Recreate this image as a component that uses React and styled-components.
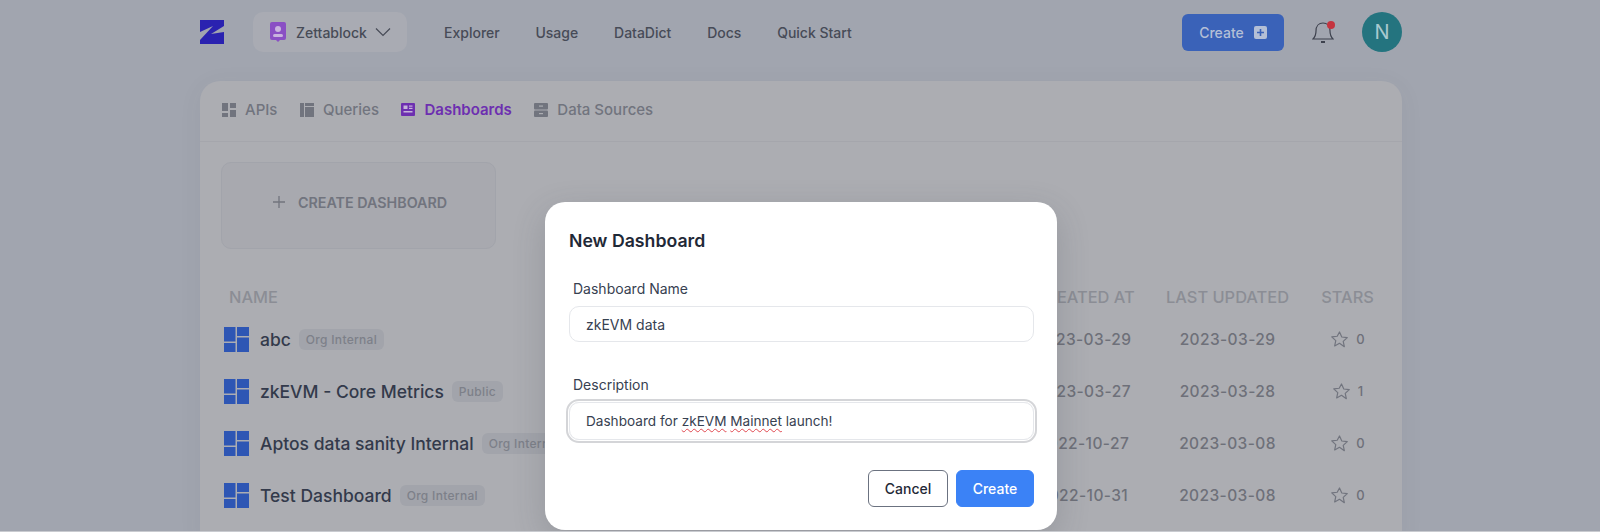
import React from 'react';
import styled, { createGlobalStyle } from 'styled-components';

const GlobalStyle = createGlobalStyle`
  html, body {
    margin: 0;
    height: 532px;
    overflow: hidden;
    background: #c9cbd0;
    font-family: Inter, "Liberation Sans", sans-serif;
  }
`;

const Page = styled.div`
  position: relative;
  height: 531px;
  overflow: hidden;
  background: #a1a5af;
  padding: 12px 198px 0 200px;
  box-sizing: border-box;
`;

const Nav = styled.nav`
  display: flex;
  align-items: center;
  height: 40px;
  margin-bottom: 29px;
`;

const Logo = styled.svg`
  width: 24px;
  height: 24px;
  margin-right: 29px;
`;

const Workspace = styled.div`
  width: 154px;
  height: 40px;
  box-sizing: border-box;
  padding-left: 17px;
  display: flex;
  align-items: center;
  gap: 8px;
  background: #a9abb3;
  border-radius: 10px;
  color: #474b57;
  font-size: 14px;
  font-weight: 500;
  margin-right: 37px;
`;

const WorkspaceName = styled.span`
  margin-left: 2px;
`;

const NavLinks = styled.div`
  display: flex;
  gap: 35.8px;
  flex: 1;
`;

const NavLink = styled.a`
  color: #474b57;
  font-size: 14px;
  font-weight: 500;
`;

const CreateNavButton = styled.button`
  width: 102px;
  height: 37px;
  border: 0;
  border-radius: 6px;
  background: #3a62b8;
  color: #b4bfd6;
  font: 500 14px Inter, sans-serif;
  display: flex;
  align-items: center;
  justify-content: center;
  gap: 10px;
  margin-right: 28px;
`;

const Bell = styled.div`
  position: relative;
  width: 22px;
  height: 26px;
  margin-right: 28px;
  &::after {
    content: '';
    position: absolute;
    top: 2px;
    right: -1px;
    width: 8px;
    height: 8px;
    border-radius: 50%;
    background: #c5343f;
  }
`;

const Avatar = styled.div`
  width: 40px;
  height: 40px;
  border-radius: 50%;
  background: #24747f;
  color: #a9c9cf;
  font-size: 20px;
  display: flex;
  align-items: center;
  justify-content: center;
`;

const Card = styled.section`
  background: #acadb2;
  border-radius: 20px 20px 0 0;
  box-shadow: 0 4px 24px rgba(60, 64, 80, 0.06);
  height: 460px;
`;

const Tabs = styled.div`
  display: flex;
  align-items: center;
  height: 61px;
  box-sizing: border-box;
  padding: 0 0 3px 22px;
  gap: 22.5px;
  border-bottom: 1px solid #a5a6ac;
`;

const Tab = styled.div`
  display: flex;
  align-items: center;
  gap: 9px;
  font-size: 15px;
  font-weight: ${(p) => (p.$active ? 600 : 500)};
  color: ${(p) => (p.$active ? '#6d2fb0' : '#71747e')};
`;

const Body = styled.div`
  padding: 20px 28px 0 21px;
`;

const CreateCard = styled.div`
  width: 275px;
  height: 87px;
  box-sizing: border-box;
  padding: 0 0 7px 2px;
  border: 1px solid #a2a4ab;
  border-radius: 10px;
  background: #a8a9af;
  display: flex;
  align-items: center;
  justify-content: center;
  gap: 12px;
  color: #71747e;
  font-size: 14.3px;
  font-weight: 600;
  margin-bottom: 36px;
`;

const Grid = styled.div`
  display: grid;
  grid-template-columns: 1fr 104px 123px 53px;
  column-gap: 32px;
  align-items: center;
`;

const HeadRow = styled(Grid)`
  height: 24px;
  margin-bottom: 4px;
  padding-left: 8px;
  color: #8b8d95;
  font-size: 16.4px;
  font-weight: 500;
`;

const HeadCell = styled.div`
  white-space: nowrap;
  text-align: ${(p) => (p.$left ? 'left' : 'center')};
`;

const CreatedHead = styled(HeadCell)`
  margin-right: -5px;
`;

const Row = styled(Grid)`
  height: 52px;
  padding-left: 3px;
`;

const NameCell = styled.div`
  display: flex;
  align-items: center;
  gap: 11px;
  color: #333a4b;
  font-size: 17.5px;
  font-weight: 500;
  white-space: nowrap;
`;

const Badge = styled.span`
  margin-left: -3px;
  padding: 0 7px;
  height: 21px;
  line-height: 21px;
  border-radius: 6px;
  background: #a2a4ab;
  color: #7d8089;
  font-size: 12px;
  font-weight: 500;
  letter-spacing: 0.3px;
`;

const DateCell = styled.div`
  color: #6e7079;
  font-size: 15.5px;
  font-weight: 500;
  letter-spacing: 0.4px;
  text-align: center;
  white-space: nowrap;
`;

const CreatedDate = styled(DateCell)`
  margin-right: -3px;
`;

const StarCell = styled.div`
  display: flex;
  align-items: center;
  justify-content: center;
  gap: 7px;
  color: #6e7079;
  font-size: 13px;
  font-weight: 500;
`;

const Overlay = styled.div`
  position: absolute;
  inset: 0;
  display: flex;
  justify-content: center;
  padding-top: 202px;
  padding-left: 2px;
  box-sizing: border-box;
`;

const Modal = styled.div`
  width: 512px;
  height: 328px;
  box-sizing: border-box;
  padding: 26px 23px 0 24px;
  background: #fff;
  border-radius: 20px;
  box-shadow: 0 10px 32px rgba(70, 72, 80, 0.22);
`;

const Title = styled.h2`
  margin: 0 0 26px;
  font-size: 17.7px;
  line-height: 26px;
  font-weight: 600;
  color: #1f2937;
`;

const Label = styled.div`
  margin: 0 0 8px 4px;
  font-size: 14px;
  line-height: 18px;
  color: #374151;
`;

const Field = styled.div`
  height: ${(p) => (p.$focus ? '38px' : '36px')};
  box-sizing: border-box;
  display: flex;
  align-items: center;
  padding-left: 16px;
  margin-bottom: ${(p) => (p.$focus ? '30px' : '34px')};
  border: 1px solid #e5e7eb;
  border-radius: 10px;
  font-size: ${(p) => (p.$focus ? '13.6px' : '14px')};
  color: #374151;
  white-space: pre;
  ${(p) => p.$focus && 'box-shadow: 0 0 0 1px #fff, 0 0 0 3px #d4d5d8;'}
`;

const Misspelt = styled.span`
  text-decoration: underline wavy #e0484f 1px;
  text-underline-offset: 2px;
`;

const Actions = styled.div`
  display: flex;
  justify-content: flex-end;
  gap: 8px;
`;

const Button = styled.button`
  height: 37px;
  width: ${(p) => (p.$primary ? '78px' : '80px')};
  box-sizing: border-box;
  border-radius: 6px;
  border: 1px solid ${(p) => (p.$primary ? '#3b82f6' : '#6b7280')};
  background: ${(p) => (p.$primary ? '#3b82f6' : '#fff')};
  color: ${(p) => (p.$primary ? '#fff' : '#1f2937')};
  font: 500 14px Inter, sans-serif;
`;

const OrgIcon = () => (
  <svg width="16" height="20" viewBox="0 0 16 20">
    <path d="M2 0h12a2 2 0 0 1 2 2v14a2 2 0 0 1-2 2h-4l-2 2-2-2H2a2 2 0 0 1-2-2V2a2 2 0 0 1 2-2z" fill="#8a4fc4" />
    <circle cx="8" cy="7" r="3" fill="#c9b3de" />
    <rect x="3" y="12" width="10" height="3" rx="1.5" fill="#c9b3de" />
  </svg>
);

const ApiIcon = () => (
  <svg width="14" height="14" viewBox="0 0 14 14" fill="#71747e">
    <rect width="6" height="8" />
    <rect x="8" width="6" height="5" />
    <rect y="10" width="6" height="4" />
    <rect x="8" y="7" width="6" height="7" />
  </svg>
);

const QueryIcon = () => (
  <svg width="14" height="14" viewBox="0 0 14 14" fill="#71747e">
    <rect width="4" height="14" />
    <rect x="5" width="9" height="3" />
    <rect x="5" y="4" width="9" height="10" />
  </svg>
);

const DashIcon = () => (
  <svg width="14" height="13" viewBox="0 0 14 13">
    <rect width="14" height="13" rx="1" fill="#6d2fb0" />
    <rect x="2.500" y="2.500" width="4" height="3.500" fill="#c6b4da" />
    <rect x="8" y="2.500" width="3.500" height="1.200" fill="#c6b4da" />
    <rect x="8" y="4.800" width="3.500" height="1.200" fill="#c6b4da" />
    <rect x="2.500" y="8" width="9" height="1.500" fill="#c6b4da" />
  </svg>
);

const SourceIcon = () => (
  <svg width="14" height="14" viewBox="0 0 14 14">
    <rect width="14" height="6.5" rx="1" fill="#71747e" />
    <rect y="7.5" width="14" height="6.5" rx="1" fill="#71747e" />
    <rect x="5" y="2.5" width="4" height="1.2" fill="#acadb2" />
    <rect x="5" y="10" width="4" height="1.2" fill="#acadb2" />
  </svg>
);

const RowIcon = () => (
  <svg width="25" height="25" viewBox="0 0 25 25" fill="#2e56b4">
    <rect width="11.5" height="14.500" />
    <rect x="13" width="12" height="9" />
    <rect y="16" width="11.5" height="9" />
    <rect x="13" y="10.500" width="12" height="14.500" />
  </svg>
);

const Star = () => (
  <svg width="19" height="19" viewBox="0 0 24 24" fill="none" stroke="#71747e" strokeWidth="1.500" strokeLinejoin="round">
    <path d="M12 2.500l2.900 6.300 6.900.8-5.100 4.700 1.400 6.800L12 16.800l-6.100 3.400 1.400-6.800L2.200 8.700l6.900-.8z" />
  </svg>
);

const rows = [
  { name: 'abc', badge: 'Org Internal', created: '2023-03-29', updated: '2023-03-29', stars: 0 },
  { name: 'zkEVM - Core Metrics', badge: 'Public', created: '2023-03-27', updated: '2023-03-28', stars: 1 },
  { name: 'Aptos data sanity Internal', badge: 'Org Internal', created: '2022-10-27', updated: '2023-03-08', stars: 0 },
  { name: 'Test Dashboard', badge: 'Org Internal', created: '2022-10-31', updated: '2023-03-08', stars: 0 },
];

const App = () => (
  <Page>
    <GlobalStyle />
    <Nav>
      <Logo viewBox="0 0 24 24" fill="#2a22b0">
        <path d="M0 0H24V6L11 14 24 12V24H0V20L13 6 0 12Z" />
      </Logo>
      <Workspace>
        <OrgIcon />
        <WorkspaceName>Zettablock</WorkspaceName>
        <svg width="16" height="16" viewBox="0 0 16 16" fill="none" stroke="#474b57" strokeWidth="1.2">
          <path d="M1 4.500l7 7 7-7" />
        </svg>
      </Workspace>
      <NavLinks>
        <NavLink>Explorer</NavLink>
        <NavLink>Usage</NavLink>
        <NavLink>DataDict</NavLink>
        <NavLink>Docs</NavLink>
        <NavLink>Quick Start</NavLink>
      </NavLinks>
      <CreateNavButton>
        Create
        <svg width="13" height="13" viewBox="0 0 13 13">
          <rect width="13" height="13" rx="2" fill="#b4bfd6" />
          <path d="M6.500 3v7M3 6.500h7" stroke="#3a62b8" strokeWidth="1.600" />
        </svg>
      </CreateNavButton>
      <Bell>
        <svg width="22" height="26" viewBox="0 0 22 26" fill="none" stroke="#3d414d" strokeWidth="1.200">
          <path d="M1 20c2-2 3-4 3-8 0-5 3-8 7-8s7 3 7 8c0 4 1 6 3 8z" />
          <path d="M9 23h4" strokeWidth="2" />
        </svg>
      </Bell>
      <Avatar>N</Avatar>
    </Nav>
    <Card>
      <Tabs>
        <Tab><ApiIcon />APIs</Tab>
        <Tab><QueryIcon />Queries</Tab>
        <Tab $active><DashIcon />Dashboards</Tab>
        <Tab><SourceIcon />Data Sources</Tab>
      </Tabs>
      <Body>
        <CreateCard>
          <svg width="14" height="14" viewBox="0 0 14 14" stroke="#71747e" strokeWidth="1.300">
            <path d="M7 1v12M1 7h12" />
          </svg>
          CREATE DASHBOARD
        </CreateCard>
        <HeadRow>
          <HeadCell $left>NAME</HeadCell>
          <CreatedHead>CREATED AT</CreatedHead>
          <HeadCell>LAST UPDATED</HeadCell>
          <HeadCell>STARS</HeadCell>
        </HeadRow>
        {rows.map((row) => (
          <Row key={row.name}>
            <NameCell>
              <RowIcon />
              {row.name}
              <Badge>{row.badge}</Badge>
            </NameCell>
            <CreatedDate>{row.created}</CreatedDate>
            <DateCell>{row.updated}</DateCell>
            <StarCell><Star />{row.stars}</StarCell>
          </Row>
        ))}
      </Body>
    </Card>
    <Overlay>
      <Modal>
        <Title>New Dashboard</Title>
        <Label>Dashboard Name</Label>
        <Field>zkEVM data</Field>
        <Label>Description</Label>
        <Field $focus>
          <span>Dashboard for <Misspelt>zkEVM</Misspelt> <Misspelt>Mainnet</Misspelt> launch!</span>
        </Field>
        <Actions>
          <Button>Cancel</Button>
          <Button $primary>Create</Button>
        </Actions>
      </Modal>
    </Overlay>
  </Page>
);

export default App;
